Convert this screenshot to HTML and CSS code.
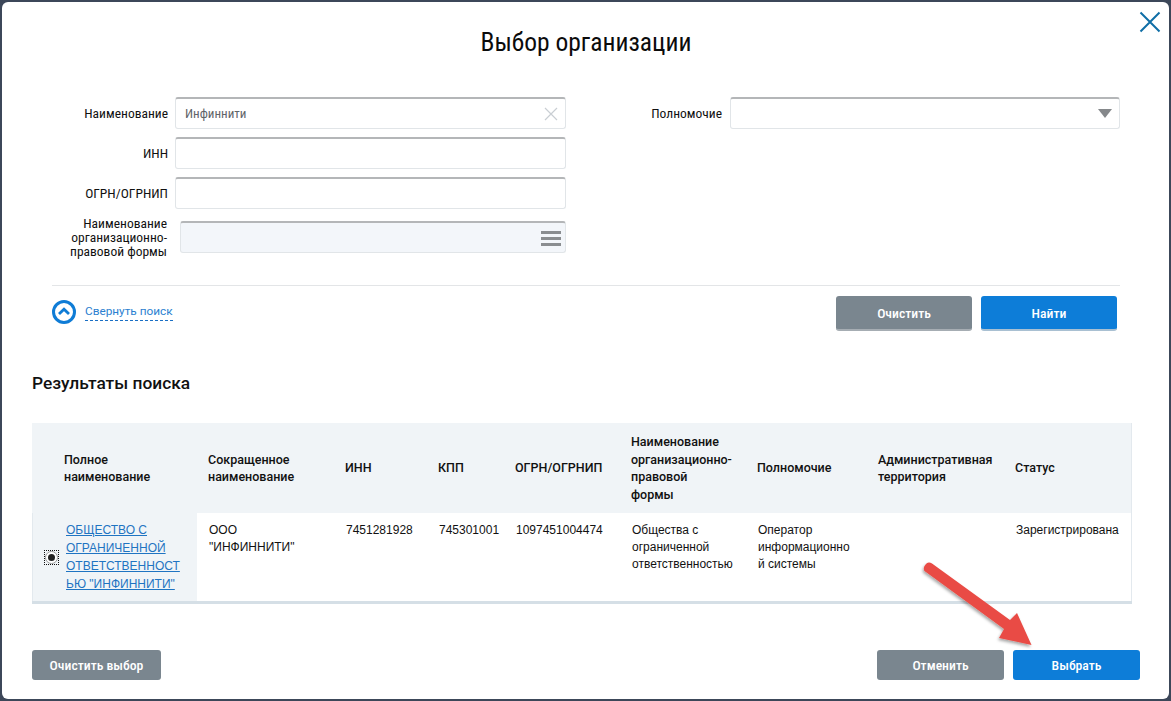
FILE: index.html
```html
<!DOCTYPE html>
<html lang="ru">
<head>
<meta charset="utf-8">
<title>Выбор организации</title>
<link rel="stylesheet" href="styles.css">
</head>
<body>
<div class="modal">
  <svg class="close" width="22" height="22" viewBox="0 0 22 22"><path d="M1.5 1.5 20.5 20.5M20.5 1.5 1.5 20.5" stroke="#0f6ea6" stroke-width="2" fill="none"/></svg>
  <h1 class="title">Выбор организации</h1>

  <div class="form">
    <div class="form-left">
      <div class="row">
        <label class="label">Наименование</label>
        <div class="input"><span class="value">Инфиннити</span>
          <svg width="14" height="14" viewBox="0 0 14 14"><path d="M1 1 13 13M13 1 1 13" stroke="#c9ced3" stroke-width="1.2" fill="none"/></svg>
        </div>
      </div>
      <div class="row">
        <label class="label">ИНН</label>
        <div class="input"></div>
      </div>
      <div class="row">
        <label class="label">ОГРН/ОГРНИП</label>
        <div class="input"></div>
      </div>
      <div class="row row-tall">
        <label class="label label-multi">Наименование организационно-правовой формы</label>
        <div class="input input-disabled">
          <svg width="20" height="16" viewBox="0 0 20 16"><path d="M0 2.5H20M0 8.5H20M0 14.5H20" stroke="#8a8d90" stroke-width="3" fill="none"/></svg>
        </div>
      </div>
    </div>
    <div class="form-right">
      <label class="label">Полномочие</label>
      <div class="input input-select">
        <svg width="14" height="9" viewBox="0 0 14 9"><path d="M0 0H14L7 9Z" fill="#85888b"/></svg>
      </div>
    </div>
  </div>

  <div class="toolbar">
    <a class="collapse">
      <svg width="24" height="24" viewBox="0 0 24 24"><circle cx="12" cy="12" r="10.500" fill="none" stroke="#0f7cd6" stroke-width="3"/><path d="M7 14 12 9.200 17 14" fill="none" stroke="#0f7cd6" stroke-width="2.800"/></svg>
      <span class="collapse-text">Свернуть поиск</span>
    </a>
    <div class="toolbar-buttons">
      <button class="btn btn-gray btn-search">Очистить</button>
      <button class="btn btn-blue btn-search">Найти</button>
    </div>
  </div>

  <h2 class="results-title">Результаты поиска</h2>

  <table class="results">
    <colgroup>
      <col class="c1"><col class="c2"><col class="c3"><col class="c4"><col class="c5"><col class="c6"><col class="c7"><col class="c8"><col class="c9">
    </colgroup>
    <thead>
      <tr>
        <th class="th-first">Полное наименование</th>
        <th>Сокращенное наименование</th>
        <th>ИНН</th>
        <th>КПП</th>
        <th>ОГРН/ОГРНИП</th>
        <th>Наименование организационно-правовой<br>формы</th>
        <th>Полномочие</th>
        <th>Административная территория</th>
        <th class="cell-last">Статус</th>
      </tr>
    </thead>
    <tbody>
      <tr>
        <td class="td-first">
          <div class="select-cell">
            <span class="radio-focus"><span class="radio"><span class="radio-dot"></span></span></span>
            <a class="org-link" href="#">ОБЩЕСТВО С ОГРАНИЧЕННОЙ ОТВЕТСТВЕННОСТЬЮ "ИНФИННИТИ"</a>
          </div>
        </td>
        <td>ООО "ИНФИННИТИ"</td>
        <td class="td-tight">7451281928</td>
        <td class="td-tight">745301001</td>
        <td class="td-tight">1097451004474</td>
        <td class="td-tight">Общества с ограниченной ответственностью</td>
        <td>Оператор информационной системы</td>
        <td></td>
        <td class="td-tight cell-last">Зарегистрирована</td>
      </tr>
    </tbody>
  </table>

  <div class="footer">
    <button class="btn btn-gray btn-clear">Очистить выбор</button>
    <div class="footer-right">
      <button class="btn btn-gray btn-foot">Отменить</button>
      <button class="btn btn-blue btn-foot">Выбрать</button>
    </div>
  </div>

  <svg class="arrow" width="130" height="105" viewBox="0 0 130 105">
    <defs><filter id="sh" x="-20%" y="-20%" width="140%" height="140%"><feDropShadow dx="-1" dy="2" stdDeviation="1.500" flood-color="#000" flood-opacity=".35"/></filter></defs>
    <path filter="url(#sh)" d="M6.500 3.500C8 2 10 2 12 3.500L90 60 97 53 111.500 85 79 78 84 69 4.500 11C3 9 4 5.500 6.500 3.500Z" fill="#e94c45"/>
  </svg>
</div>
</body>
</html>
```
FILE: styles.css
```css
* { box-sizing: border-box; }
html, body { margin: 0; height: 100%; }
body {
  background: #3c4759;
  padding: 2px;
  font-family: Roboto, "Liberation Sans", sans-serif;
  color: #111;
  overflow: hidden;
}
.modal {
  position: relative;
  width: 1167px;
  height: 697px;
  background: #fff;
  border-radius: 6px;
  padding: 22px 29px 0 30px;
}
.close { position: absolute; left: 1137px; top: 9px; }
.title {
  margin: 0;
  font-size: 25.5px;
  font-weight: 400;
  font-stretch: 86%;
  line-height: 36px;
  text-align: center;
  color: #0b0b0b;
}
.form {
  display: flex;
  justify-content: space-between;
  margin: 37px 0 0 20px;
  width: 1068px;
}
.form-left { width: 514px; display: flex; flex-direction: column; gap: 8px; }
.form-right { display: flex; align-items: center; align-self: flex-start; gap: 8px; }
.row { display: flex; align-items: center; gap: 7px; height: 32px; }
.row-tall { margin-top: 4px; gap: 13px; }
.label {
  width: 116px;
  flex: none;
  text-align: right;
  font-size: 13.5px;
  font-stretch: 86%;
  line-height: 14px;
  color: #111;
}
.form-right .label { width: auto; }
.label-multi { width: 115px; }
.input {
  display: flex;
  align-items: center;
  justify-content: space-between;
  width: 391px;
  height: 32px;
  padding: 0 7px 0 9px;
  border: 1px solid #e1e5e8;
  border-top: 2px solid #b4b6b8;
  border-radius: 3px;
  background: #fff;
}
.value { font-size: 13px; font-stretch: 86%; color: #5f6468; }
.input-disabled { width: 386px; background: #f3f6fa; padding-right: 4px; justify-content: flex-end; }
.input-select { width: 390px; justify-content: flex-end; padding-right: 7px; }

.toolbar {
  display: flex;
  align-items: flex-start;
  justify-content: space-between;
  width: 1068px;
  margin: 32px 0 0 20px;
  padding: 10px 3px 0 0;
  border-top: 1px solid #e3e5e7;
}
.collapse { display: flex; align-items: center; gap: 9px; margin-top: 4px; }
.collapse-text {
  font-size: 11.8px;
  line-height: 15px;
  padding-bottom: 1px;
  color: #2c7fd0;
  border-bottom: 1px dashed #1a6fc4;
}
.toolbar-buttons { display: flex; gap: 9px; }
.btn {
  border: 0;
  border-radius: 3px;
  font-family: Roboto, "Liberation Sans", sans-serif;
  font-size: 13.7px;
  font-stretch: 86%;
  font-weight: 500;
  color: #fff;
  padding: 0;
}
.btn-gray { background: #7a868f; }
.btn-blue { background: #0d7dd8; }
.btn-search { width: 136px; height: 35px; border-bottom: 2px solid #a9c0d2; }
.btn-gray.btn-search { border-bottom-color: #a6adb3; }

.results-title {
  margin: 40px 0 0 0;
  font-size: 17.35px;
  font-weight: 500;
  line-height: 24px;
  color: #111;
}
.results {
  margin-top: 28px;
  width: 1100px;
  table-layout: fixed;
  border-collapse: collapse;
  font-family: "Liberation Sans", Arial, sans-serif;
  font-size: 12px;
  border-bottom: 3px solid #d5dfe6;
}
.c1 { width: 165px; } .c2 { width: 137px; } .c3 { width: 93px; }
.c4 { width: 77px; } .c5 { width: 116px; } .c6 { width: 126px; }
.c7 { width: 121px; } .c8 { width: 137px; } .c9 { width: 128px; }
.results thead tr { background: #f0f4f7; height: 90px; }
.results th {
  padding: 0 5px 0 11px;
  text-align: left;
  font-family: Roboto, "Liberation Sans", sans-serif;
  font-size: 12.5px;
  font-weight: 500;
  line-height: 17.5px;
  vertical-align: middle;
  color: #111;
}
.results th.th-first { padding-left: 32px; padding-right: 30px; }
.results td {
  height: 89px;
  padding: 9px 12px 0 12px;
  vertical-align: top;
  line-height: 17px;
  overflow-wrap: anywhere;
  color: #111;
  border-bottom: 1px solid #eef1f4;
}
.results td.td-tight { padding-right: 0; }
.results .cell-last { box-shadow: inset -1px 0 0 #e3e9ee; }
.results td.td-first {
  padding: 8px 15px 0 12px;
  background: #f0f4f7;
  box-shadow: inset 1px 0 0 #e3e9ee;
}
.select-cell { display: flex; align-items: center; gap: 7px; }
.radio-focus {
  flex: none;
  display: flex;
  align-items: center;
  justify-content: center;
  width: 15px;
  height: 15px;
  border: 1px dotted #111;
}
.radio {
  display: flex;
  align-items: center;
  justify-content: center;
  width: 13px;
  height: 13px;
  border: 1px solid #9a9a9a;
  border-radius: 50%;
  background: #fff;
}
.radio-dot { width: 7px; height: 7px; border-radius: 50%; background: #222; }
.org-link { color: #1f74c2; line-height: 18px; overflow-wrap: anywhere; text-decoration: underline; }

.footer {
  display: flex;
  justify-content: space-between;
  align-items: flex-start;
  margin-top: 46px;
  width: 1108px;
}
.footer-right { display: flex; gap: 9px; }
.btn-clear { width: 129px; height: 30px; }
.btn-foot { width: 127px; height: 30px; }

.arrow { position: absolute; left: 918px; top: 558px; pointer-events: none; }
```
